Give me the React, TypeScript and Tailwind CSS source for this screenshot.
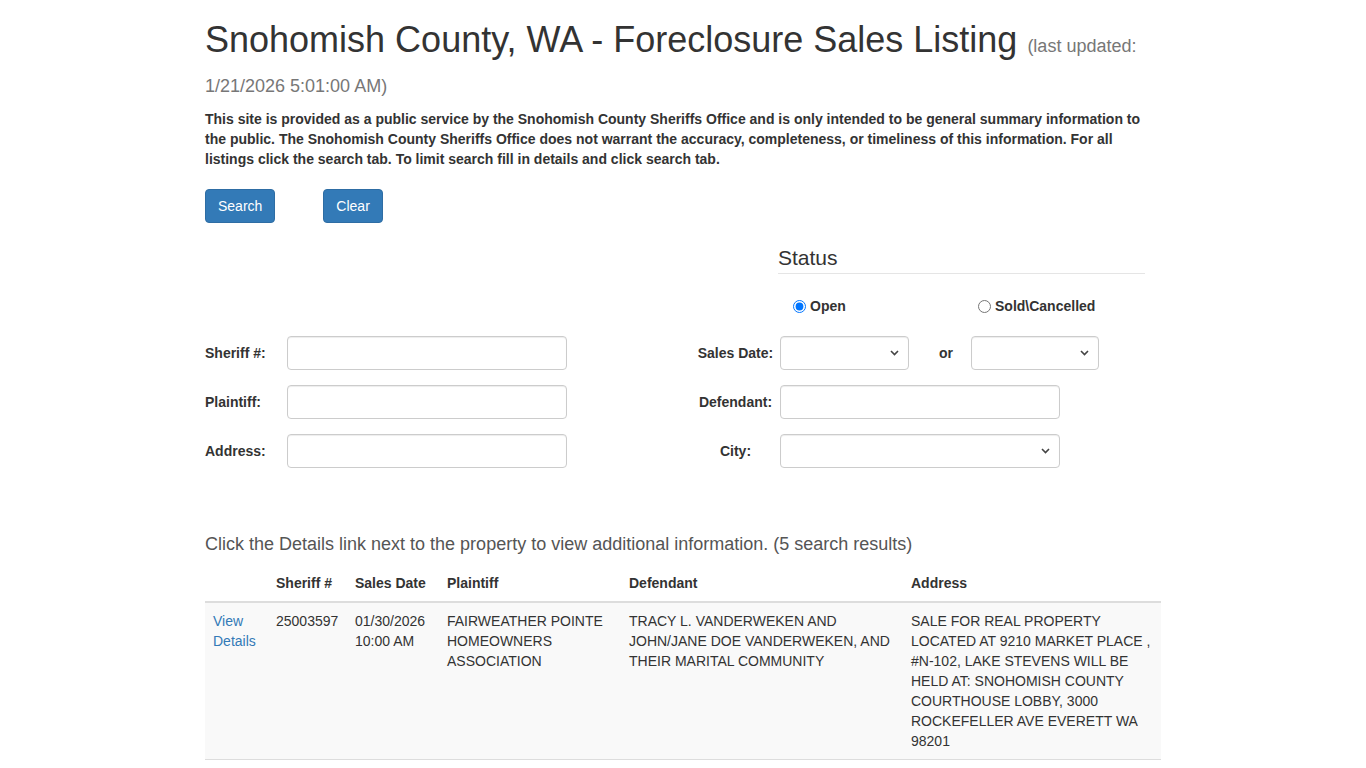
import React from 'react'

function Chevron() {
  return (
    <svg
      className="pointer-events-none absolute right-[10px] top-1/2 -mt-[3px]"
      width="9"
      height="6"
      viewBox="0 0 9 6"
      fill="none"
    >
      <path d="M1 1l3.5 3.5L8 1" stroke="#444" strokeWidth="1.6" />
    </svg>
  )
}

function Select({ width }: { width: string }) {
  return (
    <div className={`relative h-[34px] ${width}`}>
      <select className="h-full w-full appearance-none rounded-[4px] border border-[#ccc] bg-white shadow-[inset_0_1px_1px_rgba(0,0,0,0.075)]">
        <option value=""></option>
      </select>
      <Chevron />
    </div>
  )
}

function TextInput() {
  return (
    <input
      type="text"
      className="h-[34px] w-[280px] rounded-[4px] border border-[#ccc] bg-white px-3 shadow-[inset_0_1px_1px_rgba(0,0,0,0.075)]"
    />
  )
}

function LeftLabel({ children }: { children: React.ReactNode }) {
  return <label className="w-[82px] font-bold">{children}</label>
}

function RightLabel({ children }: { children: React.ReactNode }) {
  return <label className="w-[89px] text-center font-bold">{children}</label>
}

export default function App() {
  return (
    <div className="min-h-screen bg-white font-['Liberation_Sans',Arial,sans-serif] text-[14px] leading-[20px] text-[#333]">
      <div className="mx-auto w-[956px]">
        <h1 className="mt-5 mb-[10px] text-[36px] font-normal leading-[39.6px]">
          Snohomish County, WA - Foreclosure Sales Listing{' '}
          <small className="text-[18px] leading-none text-[#777]">(last updated: 1/21/2026 5:01:00 AM)</small>
        </h1>

        <p className="font-bold">
          This site is provided as a public service by the Snohomish County Sheriffs Office and is only intended to be
          general summary information to the public. The Snohomish County Sheriffs Office does not warrant the accuracy,
          completeness, or timeliness of this information. For all listings click the search tab. To limit search fill
          in details and click search tab.
        </p>

        <div className="mt-5 flex gap-[48px]">
          <button className="h-[34px] rounded-[4px] border border-[#2e6da4] bg-[#337ab7] px-3 text-white">Search</button>
          <button className="h-[34px] rounded-[4px] border border-[#2e6da4] bg-[#337ab7] px-3 text-white">Clear</button>
        </div>

        <div className="mt-5 ml-[573px] w-[367px] border-b border-[#e5e5e5] text-[21px] leading-[30px]">Status</div>

        <div className="mt-[22px] ml-[588px] flex h-5 items-center font-bold">
          <label className="flex w-[185px] items-center">
            <input type="radio" name="status" defaultChecked className="mr-[4px] h-[13px] w-[13px]" />
            Open
          </label>
          <label className="flex items-center">
            <input type="radio" name="status" className="mr-[4px] h-[13px] w-[13px]" />
            Sold\Cancelled
          </label>
        </div>

        <div className="mt-5 flex flex-col gap-[15px]">
          <div className="flex h-[34px] items-center">
            <LeftLabel>Sheriff #:</LeftLabel>
            <TextInput />
            <div className="w-[124px]" />
            <RightLabel>Sales Date:</RightLabel>
            <Select width="w-[129px]" />
            <span className="ml-[30px] mr-[18px] font-bold">or</span>
            <Select width="w-[128px]" />
          </div>
          <div className="flex h-[34px] items-center">
            <LeftLabel>Plaintiff:</LeftLabel>
            <TextInput />
            <div className="w-[124px]" />
            <RightLabel>Defendant:</RightLabel>
            <TextInput />
          </div>
          <div className="flex h-[34px] items-center">
            <LeftLabel>Address:</LeftLabel>
            <TextInput />
            <div className="w-[124px]" />
            <RightLabel>City:</RightLabel>
            <Select width="w-[280px]" />
          </div>
        </div>

        <div className="mt-[66px] text-[18px] text-[#555]">
          Click the Details link next to the property to view additional information. (5 search results)
        </div>

        <table className="mt-[11px] w-full table-fixed border-collapse">
          <colgroup>
            <col className="w-[63px]" />
            <col className="w-[79px]" />
            <col className="w-[92px]" />
            <col className="w-[182px]" />
            <col className="w-[282px]" />
            <col className="w-[258px]" />
          </colgroup>
          <thead>
            <tr>
              <th className="border-b-2 border-[#ddd] p-2 text-left align-bottom"></th>
              <th className="border-b-2 border-[#ddd] p-2 text-left align-bottom">Sheriff #</th>
              <th className="border-b-2 border-[#ddd] p-2 text-left align-bottom">Sales Date</th>
              <th className="border-b-2 border-[#ddd] p-2 text-left align-bottom">Plaintiff</th>
              <th className="border-b-2 border-[#ddd] p-2 text-left align-bottom">Defendant</th>
              <th className="border-b-2 border-[#ddd] p-2 text-left align-bottom">Address</th>
            </tr>
          </thead>
          <tbody>
            <tr className="bg-[#f9f9f9] align-top">
              <td className="border-b border-[#ddd] p-2">
                <a href="#" className="text-[#337ab7]">
                  View Details
                </a>
              </td>
              <td className="border-b border-[#ddd] p-2">25003597</td>
              <td className="border-b border-[#ddd] p-2">01/30/2026 10:00 AM</td>
              <td className="border-b border-[#ddd] p-2">FAIRWEATHER POINTE HOMEOWNERS ASSOCIATION</td>
              <td className="border-b border-[#ddd] p-2">
                TRACY L. VANDERWEKEN AND JOHN/JANE DOE VANDERWEKEN, AND THEIR MARITAL COMMUNITY
              </td>
              <td className="border-b border-[#ddd] p-2">
                SALE FOR REAL PROPERTY LOCATED AT 9210 MARKET PLACE , #N-102, LAKE STEVENS WILL BE HELD AT: SNOHOMISH
                COUNTY COURTHOUSE LOBBY, 3000 ROCKEFELLER AVE EVERETT WA 98201
              </td>
            </tr>
          </tbody>
        </table>
      </div>
    </div>
  )
}
